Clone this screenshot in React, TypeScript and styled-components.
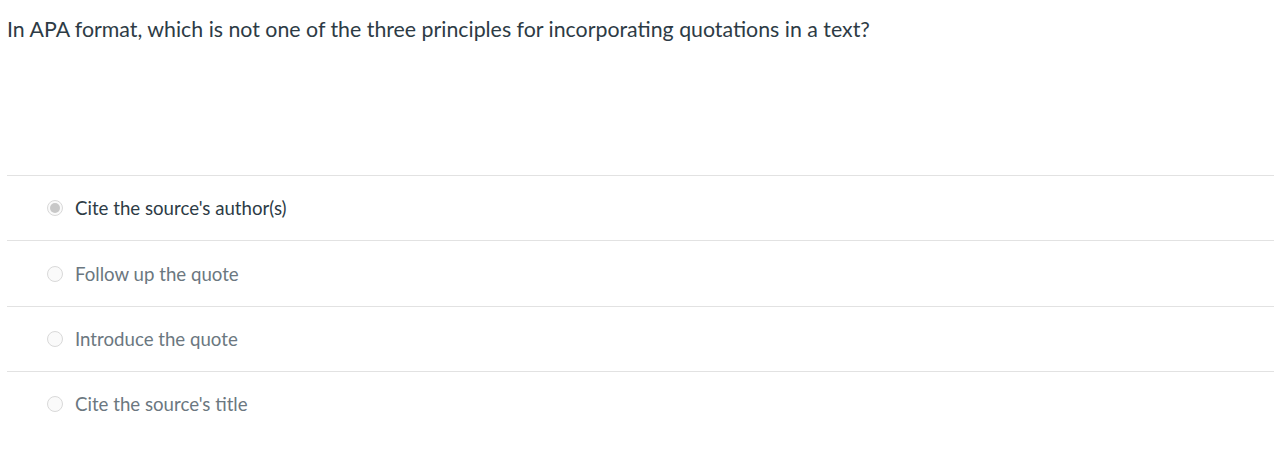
import React from "react";
import styled, { createGlobalStyle } from "styled-components";

const Global = createGlobalStyle`
  html, body { margin: 0; padding: 0; background: #fff; }
  body { font-family: Lato, "Open Sans", sans-serif; }
`;

const Page = styled.div`
  padding: 0 0 0 7px;
`;

const Question = styled.div`
  font-size: 21.33px;
  line-height: 28px;
  color: #2d3b45;
  padding-top: 15px;
  height: 175px;
  box-sizing: border-box;
`;

const Answers = styled.div`
  display: flex;
  flex-direction: column;
`;

const Row = styled.label`
  display: flex;
  align-items: center;
  height: 65.4px;
  border-top: 1px solid #e2e2e2;
  padding-left: 40px;
  box-sizing: border-box;
`;

const Radio = styled.span<{ $checked?: boolean }>`
  width: 16px;
  height: 16px;
  border-radius: 50%;
  border: 1px solid #d9d9d9;
  box-sizing: border-box;
  background: #fafafa;
  display: flex;
  align-items: center;
  justify-content: center;
  margin-right: 12px;
  &::after {
    content: "";
    display: ${(p) => (p.$checked ? "block" : "none")};
    width: 10px;
    height: 10px;
    border-radius: 50%;
    background: #c8c8c8;
  }
`;

const Label = styled.span<{ $checked?: boolean }>`
  font-size: 18.67px;
  color: ${(p) => (p.$checked ? "#2d3b45" : "#6b7780")};
`;

const answers = [
  "Cite the source's author(s)",
  "Follow up the quote",
  "Introduce the quote",
  "Cite the source's title",
];

export default function App() {
  return (
    <>
      <Global />
      <Page>
        <Question>
          In APA format, which is not one of the three principles for incorporating quotations in a text?
        </Question>
        <Answers>
          {answers.map((a, i) => (
            <Row key={a}>
              <Radio $checked={i === 0} />
              <Label $checked={i === 0}>{a}</Label>
            </Row>
          ))}
        </Answers>
      </Page>
    </>
  );
}
